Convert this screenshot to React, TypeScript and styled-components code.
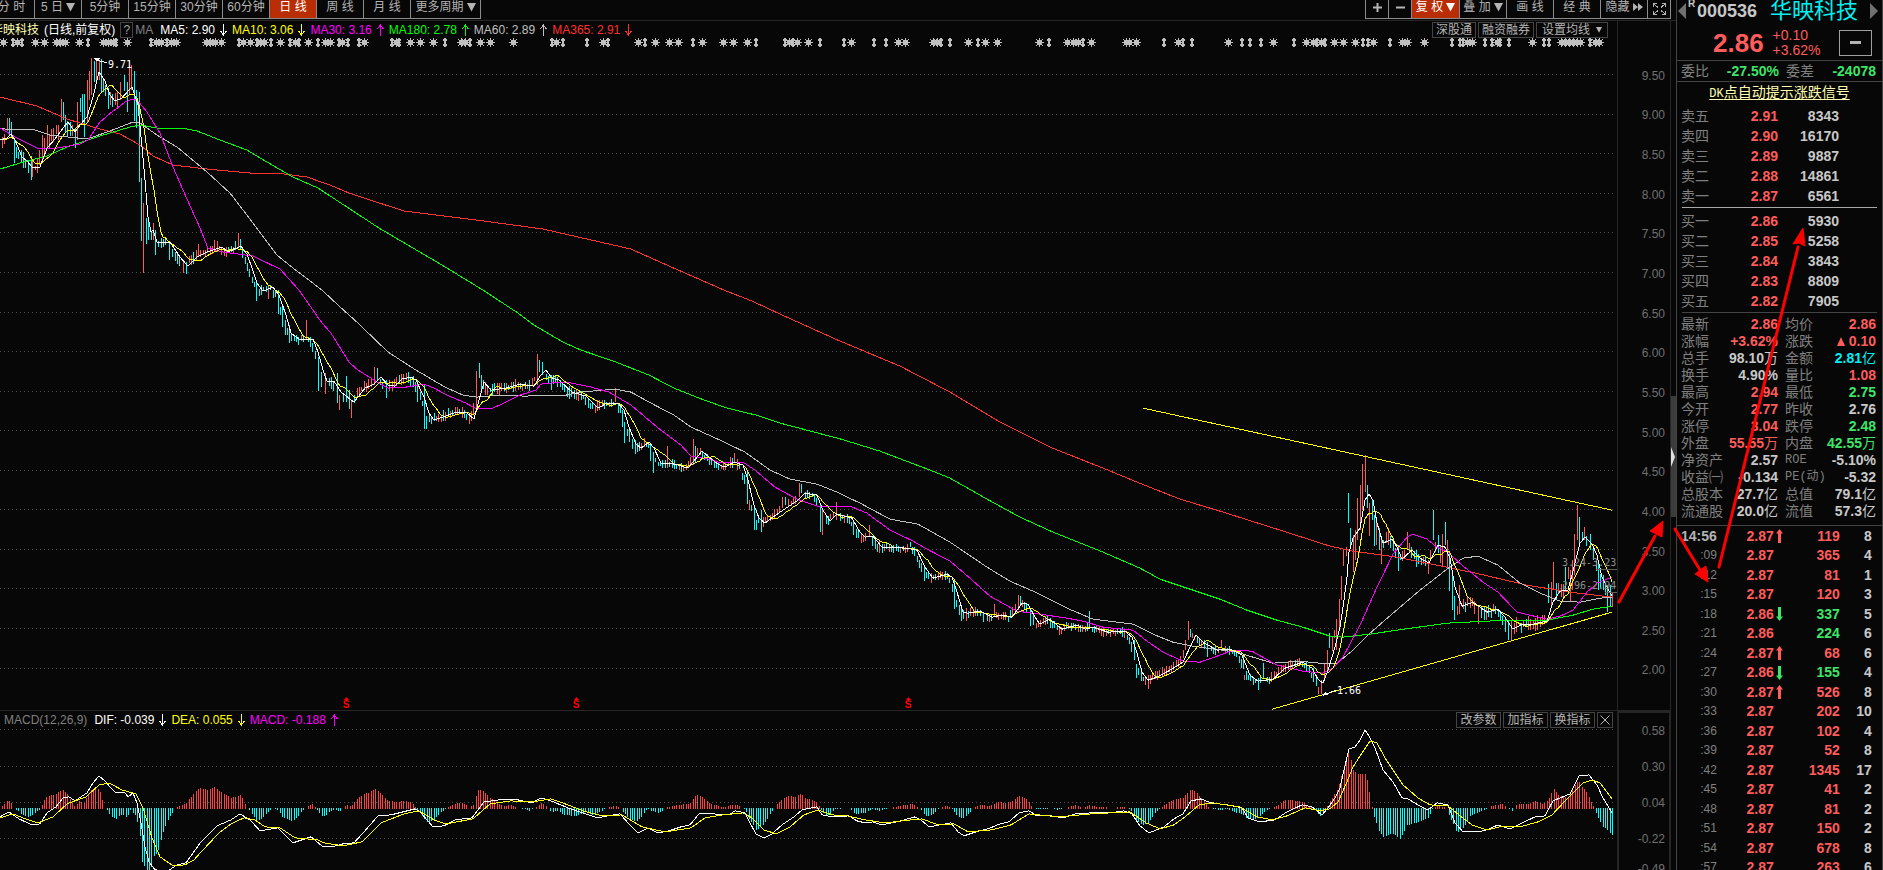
import React from "react";
import styled, { createGlobalStyle, css } from "styled-components";

const GlobalStyle = createGlobalStyle`
  * { box-sizing: border-box; }
  html, body { margin: 0; background: #070707; }
  body { overflow: hidden; }
  button { font-family: inherit; cursor: pointer; }
`;

const color = {
  bg: "#070707",
  line: "#262626",
  edge: "#444444",
  label: "#808080",
  text: "#c8c8c8",
  red: "#ff5c5c",
  green: "#3ce66a",
  cyan: "#00f0f0",
  yellow: "#ffff00",
  magenta: "#ff00ff",
  lime: "#00ff00",
  white: "#ffffff",
  silver: "#c0c0c0",
  trend: "#ff3030",
};

/* ---------- layout ---------- */

const Screen = styled.div`
  position: relative;
  display: flex;
  height: 100vh;
  overflow: hidden;
  background: ${color.bg};
  color: ${color.text};
  font-family: "Liberation Sans", "Noto Sans CJK SC", sans-serif;
  font-size: 12px;
  line-height: 16px;
`;

const Main = styled.main`
  flex: 1;
  min-width: 0;
  display: flex;
  flex-direction: column;
`;

const Toolbar = styled.nav`
  display: flex;
  justify-content: space-between;
  height: 21px;
  flex: none;
  padding-right: 5px;
  border-bottom: 1px solid ${color.line};
`;

const Group = styled.div<{ $bleed?: boolean }>`
  display: flex;
  height: 19px;
  margin-left: ${(p) => (p.$bleed ? "-12px" : "0")};
`;

const ToolButton = styled.button<{ $w: number; $on?: boolean; $mark?: boolean }>`
  display: flex;
  align-items: flex-start;
  justify-content: center;
  gap: 3px;
  width: ${(p) => p.$w}px;
  padding: 0;
  border: solid #8c8c8c;
  border-width: 0 1px 1px 0;
  background: ${(p) => (p.$on ? "#b92d05" : color.bg)};
  color: ${(p) => (p.$on ? "#ffffff" : "#b4b4b4")};
  font-size: 12px;
  line-height: 15px;
  white-space: pre;
  &:first-child { border-left-width: 1px; }
  svg { margin-top: 3px; }
`;

const Panes = styled.div`
  flex: 1;
  min-height: 0;
  display: flex;
`;

const PaneColumn = styled.div`
  flex: 1;
  min-width: 0;
  display: flex;
  flex-direction: column;
`;

const Pane = styled.section<{ $share: number; $last?: boolean }>`
  flex: ${(p) => p.$share} 1 0;
  min-height: 0;
  display: flex;
  border-bottom: ${(p) => (p.$last ? "0" : `1px solid ${color.line}`)};
`;

const Plot = styled.div`
  flex: 1;
  min-width: 0;
  display: flex;
  flex-direction: column;
`;

const PlotHead = styled.div`
  display: flex;
  justify-content: space-between;
  align-items: center;
  height: 17px;
  flex: none;
  white-space: nowrap;
`;

const Legend = styled.div<{ $start: number }>`
  display: flex;
  align-items: center;
  gap: 5px;
  margin-left: ${(p) => p.$start}px;
`;

const LegendTitle = styled.span`
  display: flex;
  align-items: center;
  gap: 2px;
  padding-right: 2px;
  color: ${color.label};
`;

const LegendItem = styled.span<{ $c: string }>`
  display: flex;
  align-items: center;
  gap: 5px;
  color: ${(p) => p.$c};
`;

const Symbol = styled.span`
  color: #ffffb4;
`;

const Period = styled.span`
  color: ${color.white};
`;

const HelpButton = styled.button`
  width: 13px;
  height: 16px;
  padding: 0;
  border: 1px solid ${color.edge};
  background: none;
  color: #a0a0a0;
  font-size: 12px;
  line-height: 14px;
`;

const HeadButtons = styled.div<{ $end: number }>`
  display: flex;
  gap: 2px;
  margin-right: ${(p) => p.$end}px;
`;

const HeadButton = styled.button<{ $w: number }>`
  display: flex;
  align-items: center;
  justify-content: center;
  gap: 6px;
  width: ${(p) => p.$w}px;
  height: 16px;
  padding: 0;
  border: 1px solid ${color.edge};
  background: none;
  color: #b4b4b4;
  font-size: 12px;
  line-height: 14px;
`;

const MarkRow = styled.svg`
  display: block;
  width: 100%;
  height: 10px;
  flex: none;
`;

const Canvas = styled.div`
  position: relative;
  flex: 1;
  min-height: 0;
  > svg { display: block; width: 100%; height: 100%; overflow: hidden; }
`;

const Note = styled.span<{ $x: number; $y: number; $dim?: boolean }>`
  position: absolute;
  left: ${(p) => (p.$x / 1617) * 100}%;
  top: ${(p) => (p.$y / 662) * 100}%;
  color: ${(p) => (p.$dim ? "#8c8c8c" : color.white)};
  font-family: "DejaVu Sans Mono", monospace;
  font-size: 10px;
  line-height: 12px;
  white-space: nowrap;
`;

const Dividend = styled.span<{ $x: number }>`
  position: absolute;
  left: ${(p) => (p.$x / 1617) * 100}%;
  bottom: 0;
  display: flex;
  flex-direction: column;
  align-items: center;
  width: 8px;
  color: #ff0000;
  font-size: 10px;
  font-weight: bold;
  line-height: 10px;
`;

const Axis = styled.div<{ $boxed?: boolean }>`
  width: 54px;
  flex: none;
  display: flex;
  flex-direction: column;
  overflow: hidden;
  border: solid ${color.line};
  border-width: ${(p) => (p.$boxed ? "2px 2px 0 2px" : "0 1px 0 1px")};
  padding: ${(p) => (p.$boxed ? "0 4px 0 0" : "35px 5px 20px 0")};
  color: #707070;
`;

const AxisLabel = styled.span<{ $h?: number }>`
  flex: ${(p) => (p.$h ? `0 0 ${p.$h}px` : "1")};
  display: flex;
  align-items: center;
  justify-content: flex-end;
`;

const Splitter = styled.div`
  width: 5px;
  flex: none;
  display: flex;
  flex-direction: column;
`;

const SplitterGap = styled.div<{ $grow: number }>`
  flex: ${(p) => p.$grow};
`;

const SplitterThumb = styled.button`
  display: flex;
  align-items: center;
  width: 5px;
  height: 121px;
  padding: 0;
  border: 0;
  background: #3c3c3c;
`;

/* ---------- quote panel ---------- */

const Side = styled.aside`
  width: 207px;
  flex: none;
  border-left: 1px solid ${color.edge};
  border-right: 1px solid ${color.edge};
  font-size: 14px;
`;

const Name = styled.header`
  display: flex;
  align-items: center;
  justify-content: space-between;
  height: 21px;
  padding: 0 4px 0 1px;
`;

const Code = styled.span`
  position: relative;
  margin-left: 11px;
  color: ${color.text};
  font-size: 18px;
  font-weight: bold;
  line-height: 20px;
`;

const Badge = styled.sup`
  position: absolute;
  left: -9px;
  top: -5px;
  font-size: 10px;
  line-height: 16px;
`;

const Company = styled.h1`
  margin: 0 12px 0 auto;
  color: ${color.cyan};
  font-size: 22px;
  font-weight: normal;
  line-height: 20px;
`;

const Arrow = styled.button`
  display: flex;
  padding: 0;
  border: 0;
  background: none;
`;

const PriceRow = styled.div`
  display: flex;
  align-items: center;
  height: 40px;
  padding: 4px 10px 0 36px;
  border-bottom: 1px solid ${color.edge};
  color: ${color.red};
  font-weight: bold;
`;

const LastPrice = styled.span`
  font-size: 26px;
  line-height: 30px;
`;

const Change = styled.span`
  display: flex;
  flex-direction: column;
  margin-left: 9px;
  font-size: 14px;
  font-weight: normal;
  line-height: 15px;
`;

const MinusButton = styled.button`
  display: flex;
  align-items: center;
  justify-content: center;
  width: 33px;
  height: 26px;
  margin-left: auto;
  padding: 0;
  border: 1px solid #a0a0a0;
  background: none;
`;

const Ratio = styled.div`
  display: grid;
  grid-template-columns: 28px 70px 7px 28px 1fr;
  align-items: center;
  height: 21px;
  padding: 0 6px 0 4px;
  border-bottom: 1px solid ${color.edge};
`;

const Muted = styled.span`
  color: ${color.label};
`;

const Figure = styled.span<{ $c: string }>`
  color: ${(p) => p.$c};
  font-weight: bold;
  text-align: right;
`;

const Signal = styled.a`
  display: block;
  height: 24px;
  color: #ffffb4;
  line-height: 20px;
  text-align: center;
  text-underline-offset: 2px;
`;

const SignalCode = styled.span`
  font-family: "Liberation Mono", monospace;
  font-size: 12px;
`;

const cell = css`
  padding: 0;
  white-space: nowrap;
`;

const Table = styled.table<{ $row: number; $stagger?: boolean }>`
  border-collapse: collapse;
  table-layout: fixed;
  margin-left: 4px;
  line-height: 17px;
  th, td { ${cell} height: ${(p) => p.$row}px; }
  ${(p) =>
    p.$stagger &&
    css`
      tr:nth-child(even) td { height: 19px; }
    `}
`;

const Label = styled.th<{ $latin?: boolean }>`
  color: ${color.label};
  font-weight: normal;
  text-align: left;
  ${(p) =>
    p.$latin &&
    css`
      font-family: "Liberation Mono", "Noto Sans CJK SC", monospace;
      font-size: 12px;
    `}
`;

const Num = styled.td<{ $c: string }>`
  color: ${(p) => p.$c};
  font-weight: bold;
  text-align: right;
`;

const Unit = styled.span`
  font-weight: normal;
`;

const Time = styled.td<{ $full?: boolean }>`
  color: ${(p) => (p.$full ? "#b4b4b4" : color.label)};
  font-size: ${(p) => (p.$full ? 14 : 12)}px;
  font-weight: ${(p) => (p.$full ? "bold" : "normal")};
  text-align: right;
`;

const Dir = styled.td`
  text-align: center;
  svg { display: block; margin: 0 auto; }
`;

const Rule = styled.hr<{ $kind: "light" | "dim" | "full" }>`
  height: 1px;
  border: 0;
  background: ${(p) => (p.$kind === "light" ? "#a8a8a8" : color.edge)};
  margin: ${(p) =>
    p.$kind === "light" ? "1px 5px 3px" : p.$kind === "dim" ? "1px 5px 3px" : "5px 0 0"};
`;

const Pointers = styled.svg`
  position: absolute;
  right: 0;
  top: 0;
  pointer-events: none;
`;

/* ---------- chart data ---------- */

type Pt = [number, number];

const parse = (s: string): Pt[] =>
  s.trim().split(/\s+/).map((p) => p.split(",").map(Number) as Pt);

const at = (pts: Pt[], x: number) => {
  if (x <= pts[0][0]) return pts[0][1];
  for (let i = 1; i < pts.length; i++) {
    if (x <= pts[i][0]) {
      const [x0, y0] = pts[i - 1];
      const [x1, y1] = pts[i];
      return y0 + ((y1 - y0) * (x - x0)) / (x1 - x0 || 1);
    }
  }
  return pts[pts.length - 1][1];
};

const ma5 = parse(`0,140 7,138 11,134 15,140 22,157 27,161 33,168 40,167 47,148 55,139 63,128 68,122 75,132 80,125 87,117 93,97
99,72 105,81 110,95 115,101 122,98 128,91 132,87 138,105 142,147 145,180 148,217 151,232 153,230 157,242 165,243 170,242 180,257
188,266 197,257 207,252 222,247 228,252 241,246 247,254 252,268 257,283 263,291 273,287 279,295 286,315 291,333 299,339 313,339
318,352 324,373 327,381 334,381 341,392 354,402 365,388 374,384 381,377 388,385 395,386 402,379 411,377 416,380 424,397 429,413
434,420 443,417 456,412 466,412 474,419 479,400 484,382 491,390 506,388 520,384 534,386 540,376 546,370 552,378 559,380 572,392
586,396 598,408 607,403 618,403 624,410 629,427 636,444 641,448 649,442 654,448 661,463 675,464 688,468 693,462 702,451 709,457
718,464 725,467 734,462 743,465 748,480 754,505 759,518 765,523 773,517 783,510 798,500 805,493 817,495 823,510 830,521 837,514
852,518 860,532 865,537 873,536 882,547 907,548 917,550 925,567 933,578 947,574 952,577 957,592 963,612 968,613 980,611 992,617
1003,615 1012,617 1022,603 1028,604 1035,617 1040,624 1050,619 1062,629 1077,625 1085,629 1093,627 1108,632 1125,631 1132,637
1137,653 1142,672 1148,680 1157,677 1170,670 1183,662 1190,647 1196,635 1203,642 1217,650 1230,649 1242,655 1250,675 1258,681
1273,679 1285,668 1303,662 1312,668 1318,679 1323,683 1328,670 1335,647 1340,627 1344,600 1347,577 1349,552 1353,538 1360,528
1365,500 1369,494 1373,500 1377,523 1383,543 1392,539 1397,547 1402,559 1412,550 1420,558 1429,563 1438,545 1445,547 1450,558
1455,587 1462,606 1473,602 1487,612 1498,609 1505,617 1513,629 1522,624 1533,624 1547,621 1553,602 1560,591 1568,590 1575,563
1580,543 1585,537 1592,544 1597,555 1602,577 1607,587 1612,596`);

const ma30 = parse(`0,128 17,138 37,148 57,148 80,144 88,140 100,122 113,111 125,102 133,99 138,101 147,112 160,133 173,167 183,190
200,228 208,248 223,252 253,256 280,269 299,290 322,323 331,333 349,362 358,370 374,380 388,388 406,387 424,384 434,388 449,396
466,403 475,408 493,408 506,402 520,395 536,390 541,384 559,382 572,383 591,387 609,392 631,405 657,427 681,445 691,456 709,459
718,462 743,462 755,470 775,487 797,499 817,506 850,506 867,513 890,530 913,541 927,549 950,561 970,578 990,596 1017,611 1040,614
1067,618 1083,621 1103,627 1133,630 1147,641 1163,652 1183,661 1200,662 1217,656 1233,650 1252,651 1277,665 1303,671 1323,673
1333,668 1343,657 1360,625 1377,587 1393,554 1407,537 1413,534 1427,539 1437,547 1448,552 1462,565 1483,582 1498,592 1517,612
1547,619 1560,616 1573,610 1587,592 1597,583 1612,577`);

const ma60 = parse(`0,128 10,130 32,129 50,135 87,139 110,131 133,122 140,123 157,135 177,147 207,172 230,193 253,223 277,255
293,268 322,290 338,305 358,323 388,352 416,370 445,387 463,395 477,397 499,395 524,396 566,395 581,392 615,389 631,392 649,402
674,415 691,427 720,440 745,452 770,470 790,479 817,484 837,492 860,503 890,519 918,524 950,542 987,567 1010,581 1033,591
1067,608 1093,619 1133,624 1153,634 1173,642 1193,646 1237,652 1253,657 1273,663 1300,661 1320,663 1337,663 1353,650 1370,633
1393,613 1420,590 1447,569 1463,558 1478,556 1498,565 1520,583 1540,593 1560,601 1580,602 1600,598 1612,597`);

const ma180 = parse(`0,169 27,161 47,156 67,147 100,136 130,127 140,125 157,128 182,128 197,131 220,140 247,150 267,162 293,177
318,188 379,228 442,265 483,290 518,313 534,325 563,342 581,350 616,362 649,375 674,388 699,398 727,408 756,415 780,423 841,439
880,451 930,470 950,478 987,499 1020,517 1053,532 1103,552 1140,568 1160,579 1187,588 1220,599 1247,610 1277,620 1303,627
1330,636 1343,637 1370,634 1397,630 1447,623 1507,620 1547,620 1573,615 1593,609 1612,606`);

const ma365 = parse(`0,97 37,106 67,119 100,129 120,134 140,145 153,156 173,165 207,169 250,173 277,173 307,177 330,185 349,193
404,211 484,221 543,229 631,249 660,262 724,290 752,301 780,314 840,341 900,366 950,392 1000,422 1050,447 1108,470 1137,482
1180,499 1220,511 1277,529 1330,546 1353,551 1397,557 1437,565 1480,574 1527,585 1570,592 1612,597`);

/* session bars with a wide range: direction, x, high, low */
const wideBars = `u2,137,148 u7,118,131 d9,118,135 d11,122,138 d14,138,163 d31,156,180 u32,160,177 u42,135,160 u47,125,147 u61,99,122
d63,102,120 d75,128,148 u77,102,140 d80,98,112 d82,94,122 d84,94,137 u87,80,122 u89,71,100 u91,58,95 d94,61,82 u96,60,82 u99,60,80
d101,59,93 d103,80,92 d108,88,109 u110,92,105 u115,93,105 u117,92,109 u120,82,100 d124,75,91 d127,82,112 u129,60,95 u131,65,90
d134,71,121 d136,90,128 d139,92,182 d141,178,241 u143,203,273 d146,218,244 d148,221,240 u153,223,240 d155,230,255 d169,243,260
u183,262,273 d186,262,274 u198,244,257 u214,240,252 u238,233,247 d240,239,250 d256,283,301 u268,286,299 d278,290,314 d282,307,327
d285,320,335 d289,325,343 u306,320,340 d318,357,391 d321,372,387 u325,373,394 d337,373,403 u339,395,410 d346,376,402 d349,390,409
u351,400,418 u374,367,385 d377,368,380 d386,380,398 d417,380,402 d424,385,429 d426,416,429 u476,371,412 d479,363,378 d481,375,390
u537,354,385 d539,360,372 d542,362,375 d551,375,390 u615,388,402 d622,410,427 d624,422,443 d629,430,442 d635,440,454 d650,443,461
d653,452,473 u667,446,468 u693,439,465 d695,446,462 u734,453,462 d747,472,504 u749,500,510 d754,505,530 d756,520,530 d761,510,532
u782,497,508 d785,497,505 u799,483,497 d801,484,493 d820,505,532 u822,510,535 u836,502,520 d853,522,535 u869,525,537 u879,540,553
d910,542,547 d924,565,581 d954,580,609 d959,605,615 d961,605,621 u966,608,621 d983,612,622 u994,604,617 u1018,595,610
d1020,596,605 d1030,610,626 d1089,611,627 d1134,640,660 d1136,664,678 d1141,670,681 u1148,675,689 u1185,640,650 u1188,621,640
d1190,629,637 d1207,642,657 u1221,640,648 d1243,655,669 u1244,675,680 d1258,678,690 d1263,663,678 d1313,668,682 u1318,687,694
u1321,680,694 u1324,663,680 u1327,650,670 d1329,633,648 u1336,619,650 u1339,599,630 u1341,576,600 u1343,550,566 d1348,493,523
d1350,528,545 u1353,535,572 u1355,530,560 u1357,498,540 u1360,485,530 u1362,464,510 u1365,455,492 d1367,485,508 u1369,503,536
d1372,500,520 d1374,515,546 u1376,520,545 d1379,528,550 u1381,540,564 u1388,528,545 d1398,545,571 u1407,532,550 d1416,550,567
u1428,560,574 d1433,510,540 d1438,535,553 u1440,545,563 u1442,534,566 d1445,522,545 u1447,540,568 d1449,552,591 d1452,570,610
d1454,596,620 u1457,606,615 u1459,585,614 u1478,605,624 d1508,620,640 u1511,621,640 d1548,584,603 u1551,582,605 u1553,562,590
d1556,583,600 d1565,567,590 u1570,570,602 u1572,560,590 u1574,534,575 u1577,505,540 d1579,517,545 u1584,527,540 d1590,534,550
d1598,560,590 d1603,575,590 d1607,585,612 d1610,585,607 u1612,592,607`
  .trim()
  .split(/\s+/)
  .map((s) => {
    const [x, hi, lo] = s.slice(1).split(",").map(Number);
    return { up: s[0] === "u", x, hi, lo };
  });

const STEP = 7 / 3;
const slots = Array.from({ length: 691 }, (_, i) => Math.round(2 + i * STEP)).filter((x) => x <= 1612);

const noise = (n: number) => {
  const v = Math.sin(n * 12.9898) * 43758.5453;
  return v - Math.floor(v);
};

const candles = (() => {
  let up = "";
  let down = "";
  const add = (isUp: boolean, x: number, hi: number, lo: number) => {
    const d = `M${x + 0.5} ${Math.round(hi)}V${Math.round(lo)}`;
    if (isUp) up += d;
    else down += d;
  };
  wideBars.forEach((b) => add(b.up, b.x, b.hi, b.lo));
  slots.forEach((x, i) => {
    if (wideBars.some((b) => Math.abs(b.x - x) < 2)) return;
    const mid = at(ma5, x + 4);
    const slope = at(ma5, x + 8) - at(ma5, x - 2);
    const isUp = noise(i) * 10 - 5 > slope * 0.5;
    const room = x < 140 ? 9 : x < 600 ? 5 : x < 1330 ? 4 : 7;
    add(isUp, x, mid - 1 - noise(i + 900) * room, mid + 2 + noise(i + 1800) * room);
  });
  return { up, down };
})();

const dif = parse(`0,817 9,812 19,819 32,825 40,824 47,813 56,807 63,798 69,797 75,801 87,793 93,783 99,776 105,781 110,787 116,793
125,793 128,797 133,793 137,803 141,823 145,847 149,862 155,870 168,871 177,865 186,863 201,842 208,835 217,826 231,820 240,814
250,820 260,831 278,828 293,843 311,837 323,847 337,846 343,844 354,843 364,832 378,816 391,815 415,809 421,813 433,827 444,826
455,820 472,818 484,802 499,800 518,800 532,803 541,798 551,801 568,808 583,813 598,818 608,816 620,814 628,823 638,833 648,828
658,833 669,831 681,827 690,825 699,814 713,814 729,815 735,811 745,813 750,823 756,834 764,838 772,834 782,825 794,817 802,810
817,807 822,815 832,817 849,816 857,821 865,823 873,822 881,825 897,822 915,817 921,820 929,827 940,825 951,823 958,832 964,836
976,832 988,829 1000,824 1009,822 1019,813 1029,811 1037,816 1051,816 1063,818 1075,814 1091,813 1110,813 1124,811 1132,814
1140,826 1149,833 1164,827 1174,819 1183,814 1191,801 1201,799 1211,803 1227,805 1242,808 1248,818 1260,822 1275,820 1287,812
1302,805 1312,807 1322,815 1328,808 1335,798 1340,788 1344,770 1349,749 1355,747 1360,740 1365,730 1369,736 1375,748 1383,770
1393,782 1402,798 1408,799 1418,805 1428,810 1437,803 1448,805 1455,823 1463,832 1478,832 1487,830 1498,825 1510,829 1520,824
1535,817 1545,816 1553,801 1570,794 1579,776 1589,775 1597,785 1603,798 1612,813`);

const dea = parse(`0,818 13,814 23,818 38,823 53,817 67,804 86,797 99,785 109,783 122,790 136,794 143,808 152,838 160,857 173,866
185,865 194,860 204,849 219,833 231,824 244,818 255,820 265,827 280,828 295,838 318,840 324,843 343,846 362,842 381,823 404,814
419,811 434,820 446,824 473,819 490,804 511,801 532,802 551,799 568,805 583,811 602,816 622,815 642,827 665,832 691,828 705,818
723,815 743,813 752,818 764,830 776,834 790,827 804,815 818,810 832,815 847,816 865,820 885,823 911,820 922,819 938,825 954,824
968,832 992,830 1011,825 1029,814 1059,817 1091,814 1130,812 1146,823 1160,829 1174,825 1185,817 1199,805 1213,803 1240,807
1257,817 1272,820 1287,816 1305,808 1320,811 1330,809 1338,802 1347,782 1353,767 1362,753 1370,741 1377,743 1385,758 1393,770
1403,785 1418,798 1430,805 1448,806 1460,816 1472,825 1487,830 1500,827 1520,827 1538,822 1552,815 1568,798 1583,783 1592,780
1600,783 1612,799`);

const hist = parse(`0,0 3,3 8,8 12,4 14,0 16,-2 23,-7 29,-9 36,-4 41,0 43,6 47,12 55,13 62,19 67,14 72,5 75,0 79,7 84,5 88,14 92,19
99,19 101,12 104,1 107,-2 110,-8 116,-11 122,-6 127,-10 130,-2 135,-7 137,-14 140,-28 141,-52 145,-60 148,-63 152,-58 154,-48
157,-45 161,-32 164,-20 168,-12 173,-3 176,1 183,3 187,6 194,15 199,20 208,18 214,21 221,16 231,10 240,13 244,6 247,0 251,-4
256,-13 261,-11 267,-5 273,0 278,-2 282,-9 292,-14 298,-8 303,-2 307,1 312,4 316,0 319,-5 323,-9 328,-5 335,-1 339,-4 343,0
346,3 351,2 357,9 363,14 370,16 376,19 381,14 387,8 394,6 406,7 412,5 416,-1 421,-6 426,-14 433,-13 438,-7 445,-1 450,2 457,5
463,5 469,0 473,3 478,18 483,17 488,12 497,5 503,2 510,3 518,0 524,-1 529,-3 537,1 541,5 547,1 551,-4 558,-3 564,-7 577,-8
585,-4 593,-7 600,-4 606,0 615,2 620,0 628,-10 636,-14 642,-8 647,-1 652,-3 658,-5 663,-2 667,1 677,3 687,4 691,5 694,11 698,13
703,10 709,5 715,3 719,1 725,1 731,3 737,3 741,0 745,-2 749,-11 752,-16 756,-22 762,-18 767,-11 773,-1 777,4 783,10 789,12
794,11 801,14 806,9 812,8 817,6 820,0 824,-7 830,-7 835,-1 849,0 853,-5 857,-6 865,-5 873,-1 880,-3 884,-1 889,0 899,2 907,3
912,4 917,1 921,-2 926,-8 932,-7 938,-1 945,2 951,1 956,-7 962,-11 968,-6 973,0 978,3 990,2 998,6 1005,5 1011,6 1019,12 1027,9
1031,2 1034,-1 1045,-1 1051,0 1057,-2 1065,0 1075,3 1081,0 1090,3 1096,1 1102,1 1110,0 1124,1 1130,-1 1136,-12 1142,-17
1148,-15 1154,-6 1160,0 1166,4 1175,9 1183,10 1189,18 1195,17 1199,12 1204,7 1209,0 1219,-2 1227,-1 1233,-4 1242,-6 1247,-11
1253,-12 1258,-10 1265,-3 1272,0 1277,2 1285,8 1300,7 1308,2 1313,0 1320,-8 1324,-3 1327,2 1333,12 1338,20 1343,40 1348,55
1352,45 1353,38 1357,34 1366,34 1368,22 1370,10 1372,1 1374,-9 1378,-22 1383,-29 1392,-25 1400,-31 1407,-17 1420,-14 1428,-10
1433,1 1440,2 1447,0 1450,-10 1457,-25 1463,-20 1470,-8 1478,-5 1487,0 1495,3 1502,4 1507,0 1512,-3 1517,4 1527,4 1535,7
1543,4 1548,8 1553,20 1558,13 1568,10 1573,20 1578,27 1583,20 1588,13 1592,4 1594,0 1597,-8 1602,-18 1607,-22 1612,-27`);

const bars = slots.reduce(
  (acc, x) => {
    const h = Math.round(at(hist, x));
    if (h > 0) acc.up += `M${x + 0.5} 809V${808 - h}`;
    if (h < 0) acc.down += `M${x + 0.5} 808V${808 - h}`;
    return acc;
  },
  { up: "", down: "" }
);

/* event markers: plain number = star, trailing i = narrow marker */
const events = `3 13i 17 22i 35 44 56 60 65 79 88i 103 108 113 116i 127 151i 156 161 167i 171 176 206 210 215 221 239i 243 250 257i
260 264 271i 280 290i 295 299i 308 318i 325 330 339i 342 348i 359i 364 392i 396 399i 410 420 433 445i 461 465 470i 480 490 513 552i
556 563i 587i 603 608i 638 645i 655 669 678 693i 702 723 733 747 756i 785i 789 793i 797 808 820i 844i 851 874i 886i 898 905 933 937
941i 950i 968 978i 985 997 1039 1049i 1067 1073 1078 1083i 1091 1126 1129 1136 1164i 1178 1183i 1192i 1228 1242i 1250i 1261i 1273
1294i 1306 1313 1317i 1321 1325i 1334 1343 1355 1363i 1368i 1373 1390i 1402 1407 1424 1452i 1460i 1463i 1467 1472 1485i 1492i 1497
1500i 1509i 1532 1544i 1549i 1561 1565 1569 1573 1577 1580 1590i 1595 1599`.split(/\s+/);

const eventPath = events
  .map((e) => {
    const x = parseInt(e, 10);
    return e.endsWith("i")
      ? `M${x - 1} 38h2v1h1v2h-1v3h1v2h-1v1h-2v-1h-1v-2h1v-3h-1v-2h1z`
      : `M${x} 38h1v9h-1zM${x - 4} 42h9v1h-9zM${x - 2} 40h5v5h-5zM${x - 3} 39h1v1h-1zM${x + 3} 39h1v1h-1zM${x - 3} 45h1v1h-1zM${x + 3} 45h1v1h-1z`;
  })
  .join("");

/* ---------- small drawings ---------- */

const Caret = ({ w = 9, c = "currentColor" }: { w?: number; c?: string }) => (
  <svg width={w} height={w} viewBox="0 0 9 9" aria-hidden>
    <path d="M0 0h9L4.5 8.5z" fill={c} />
  </svg>
);

const Trend = ({ up }: { up?: boolean }) => (
  <svg width="7" height="12" viewBox="0 0 7 12" aria-hidden fill="none" stroke="currentColor" shapeRendering="crispEdges">
    <path d={up ? "M3.5 12V0M0.5 5L3.5 1L6.5 5" : "M3.5 0V12M0.5 7L3.5 11L6.5 7"} />
  </svg>
);

const TickArrow = ({ up }: { up: boolean }) => (
  <svg width="7" height="14" viewBox="0 0 7 14" aria-hidden>
    <path
      d={up ? "M3.5 0L7 4.5H5V14H2V4.5H0z" : "M3.5 14L7 9.5H5V0H2V9.5H0z"}
      fill={up ? color.red : color.green}
    />
  </svg>
);

const Series = ({ pts, c }: { pts: Pt[]; c: string }) => (
  <polyline points={pts.map((p) => p.join(",")).join(" ")} fill="none" stroke={c} vectorEffect="non-scaling-stroke" />
);

const GridLines = ({ ys }: { ys: number[] }) => (
  <path
    d={ys.map((y) => `M0 ${y + 0.5}H1614`).join("")}
    stroke="#505050"
    strokeDasharray="1 3"
    vectorEffect="non-scaling-stroke"
  />
);

/* ---------- content ---------- */

const periods = ["分 时", "5 日", "5分钟", "15分钟", "30分钟", "60分钟", "日 线", "周 线", "月 线", "更多周期"];

const legend = [
  ["MA5: 2.90", color.white, false],
  ["MA10: 3.06", color.yellow, false],
  ["MA30: 3.16", color.magenta, true],
  ["MA180: 2.78", color.lime, true],
  ["MA60: 2.89", color.silver, true],
  ["MA365: 2.91", color.trend, false],
] as const;

const macdLegend = [
  ["DIF: -0.039", color.white, false],
  ["DEA: 0.055", color.yellow, false],
  ["MACD: -0.188", color.magenta, true],
] as const;

const priceTicks = Array.from({ length: 16 }, (_, i) => (9.5 - i * 0.5).toFixed(2));
const priceGrid = [74, 114, 153, 193, 232, 272, 312, 351, 391, 430, 470, 509, 549, 588, 628, 668];
const macdTicks = ["0.58", "0.30", "0.04", "-0.22", "-0.49"];
const macdGrid = [729, 766, 802, 838];

const asks = [
  ["卖五", "2.91", "8343"],
  ["卖四", "2.90", "16170"],
  ["卖三", "2.89", "9887"],
  ["卖二", "2.88", "14861"],
  ["卖一", "2.87", "6561"],
];
const bids = [
  ["买一", "2.86", "5930"],
  ["买二", "2.85", "5258"],
  ["买三", "2.84", "3843"],
  ["买四", "2.83", "8809"],
  ["买五", "2.82", "7905"],
];

const { red, green, text, cyan } = color;
const stats: [string, string, string, string, string, string][] = [
  ["最新", "2.86", red, "均价", "2.86", red],
  ["涨幅", "+3.62%", red, "涨跌", "▲0.10", red],
  ["总手", "98.10万", text, "金额", "2.81亿", cyan],
  ["换手", "4.90%", text, "量比", "1.08", red],
  ["最高", "2.94", red, "最低", "2.75", green],
  ["今开", "2.77", red, "昨收", "2.76", text],
  ["涨停", "3.04", red, "跌停", "2.48", green],
  ["外盘", "55.55万", red, "内盘", "42.55万", green],
  ["净资产", "2.57", text, "ROE", "-5.10%", text],
  ["收益㈠", "-0.134", text, "PE(动)", "-5.32", text],
  ["总股本", "27.7亿", text, "总值", "79.1亿", text],
  ["流通股", "20.0亿", text, "流值", "57.3亿", text],
];

const ticks: [string, string, "" | "u" | "d", string, string, string][] = [
  ["14:56", "2.87", "u", "119", red, "8"],
  [":09", "2.87", "", "365", red, "4"],
  [":12", "2.87", "", "81", red, "1"],
  [":15", "2.87", "", "120", red, "3"],
  [":18", "2.86", "d", "337", green, "5"],
  [":21", "2.86", "", "224", green, "6"],
  [":24", "2.87", "u", "68", red, "6"],
  [":27", "2.86", "d", "155", green, "4"],
  [":30", "2.87", "u", "526", red, "8"],
  [":33", "2.87", "", "202", red, "10"],
  [":36", "2.87", "", "102", red, "4"],
  [":39", "2.87", "", "52", red, "8"],
  [":42", "2.87", "", "1345", red, "17"],
  [":45", "2.87", "", "41", red, "2"],
  [":48", "2.87", "", "81", red, "2"],
  [":51", "2.87", "", "150", red, "2"],
  [":54", "2.87", "", "678", red, "8"],
  [":57", "2.87", "", "263", red, "6"],
];

const Value = ({ v }: { v: string }) => {
  const unit = /[万亿]$/.test(v) ? v.slice(-1) : "";
  const rise = v.startsWith("▲");
  const body = v.slice(rise ? 1 : 0, unit ? -1 : undefined);
  return (
    <>
      {rise && (
        <svg width="12" height="9" viewBox="0 0 12 9" aria-hidden>
          <path d="M4 0L8 9H0z" fill={color.red} />
        </svg>
      )}
      {body}
      {unit && <Unit>{unit}</Unit>}
    </>
  );
};

const Book = ({ rows }: { rows: string[][] }) => (
  <Table $row={20}>
    <colgroup>
      <col width="40" />
      <col width="57" />
      <col width="61" />
    </colgroup>
    <tbody>
      {rows.map(([name, price, volume]) => (
        <tr key={name}>
          <Label scope="row">{name}</Label>
          <Num $c={color.red}>{price}</Num>
          <Num $c={color.text}>{volume}</Num>
        </tr>
      ))}
    </tbody>
  </Table>
);

export default function App() {
  return (
    <Screen>
      <GlobalStyle />
      <Main>
        <Toolbar>
          <Group $bleed>
            {periods.map((p, i) => (
              <ToolButton key={p} $w={i === 9 ? 70 : 47} $on={i === 6}>
                {p}
                {(i === 1 || i === 9) && <Caret />}
              </ToolButton>
            ))}
          </Group>
          <Group>
            <ToolButton $w={24} aria-label="放大">
              <svg width="9" height="9" viewBox="0 0 9 9" stroke="currentColor" strokeWidth="2"><path d="M4.5 0v9M0 4.5h9" /></svg>
            </ToolButton>
            <ToolButton $w={23} aria-label="缩小">
              <svg width="9" height="9" viewBox="0 0 9 9" stroke="currentColor" strokeWidth="2"><path d="M0 4.5h9" /></svg>
            </ToolButton>
            <ToolButton $w={48} $on>复 权<Caret /></ToolButton>
            <ToolButton $w={47}>叠 加<Caret /></ToolButton>
            <ToolButton $w={47}>画 线</ToolButton>
            <ToolButton $w={47}>经 典</ToolButton>
            <ToolButton $w={47}>
              隐藏
              <svg width="10" height="8" viewBox="0 0 10 8" fill="currentColor"><path d="M0 0l5 4-5 4zM5 0l5 4-5 4z" /></svg>
            </ToolButton>
            <ToolButton $w={23} aria-label="全屏">
              <svg width="13" height="12" viewBox="0 0 13 12" fill="none" stroke="currentColor" shapeRendering="crispEdges">
                <path d="M0.5 4V0.5H4M9 0.5h3.5V4M12.5 8v3.5H9M4 11.5H0.5V8M1 1l4 3.5M12 1L8 4.5M1 11l4-3.5M12 11L8 7.5" />
              </svg>
            </ToolButton>
          </Group>
        </Toolbar>
        <Panes>
          <PaneColumn>
            <Pane $share={690}>
              <Plot>
                <PlotHead>
                  <Legend $start={-9}>
                    <Symbol>华映科技</Symbol>
                    <Period>(日线,前复权)</Period>
                    <LegendTitle>
                      <HelpButton aria-label="说明">?</HelpButton>
                      MA
                    </LegendTitle>
                    {legend.map(([label, c, up]) => (
                      <LegendItem key={label} $c={c}>{label}<Trend up={up} /></LegendItem>
                    ))}
                  </Legend>
                  <HeadButtons $end={9}>
                    <HeadButton $w={44}>深股通</HeadButton>
                    <HeadButton $w={56}>融资融券</HeadButton>
                    <HeadButton $w={72}>设置均线<Caret w={6} /></HeadButton>
                  </HeadButtons>
                </PlotHead>
                <MarkRow viewBox="0 38 1617 10" preserveAspectRatio="none" shapeRendering="crispEdges">
                  <path d={eventPath} fill={color.silver} />
                </MarkRow>
                <Canvas>
                  <svg viewBox="0 48 1617 662" preserveAspectRatio="none" shapeRendering="crispEdges">
                    <GridLines ys={priceGrid} />
                    <path d={candles.up} stroke="#ff5a5a" vectorEffect="non-scaling-stroke" />
                    <path d={candles.down} stroke="#00ffff" vectorEffect="non-scaling-stroke" />
                    <Series pts={ma365} c={color.trend} />
                    <Series pts={ma180} c={color.lime} />
                    <Series pts={ma60} c={color.silver} />
                    <Series pts={ma30} c={color.magenta} />
                    <Series pts={slots.map((x) => [x, Math.round((at(ma5, x) + at(ma5, x - 12)) / 2)] as Pt)} c={color.yellow} />
                    <Series pts={ma5} c={color.white} />
                    <Series pts={[[1143, 408], [1612, 510]]} c={color.yellow} />
                    <Series pts={[[1272, 709], [1612, 612]]} c={color.yellow} />
                    <Series pts={[[97, 60], [107, 63]]} c={color.white} />
                    <path d="M93 58h7l-3 4zM1322 696l3-4 4 2z" fill={color.white} />
                    <Series pts={[[1323, 695], [1336, 690]]} c={color.white} />
                    <path d="M1596 569.5h21M1605 592.5h12" stroke="#606060" />
                  </svg>
                  <Note $x={108} $y={11}>9.71</Note>
                  <Note $x={1337} $y={637}>1.66</Note>
                  <Note $x={1562} $y={509} $dim>3.24-3.23</Note>
                  <Note $x={1562} $y={532} $dim>2.96-2.94</Note>
                  {[342, 572, 904].map((x) => (
                    <Dividend key={x} $x={x}>
                      <svg width="5" height="3" viewBox="0 0 5 3"><path d="M0 3L2.5 0L5 3z" fill="#ff0000" /></svg>
                      S
                    </Dividend>
                  ))}
                </Canvas>
              </Plot>
              <Axis>
                {priceTicks.map((t) => <AxisLabel key={t}>{t}</AxisLabel>)}
              </Axis>
            </Pane>
            <Pane $share={159} $last>
              <Plot>
                <PlotHead>
                  <Legend $start={4}>
                    <LegendTitle>MACD(12,26,9)</LegendTitle>
                    {macdLegend.map(([label, c, up]) => (
                      <LegendItem key={label} $c={c}>{label}<Trend up={up} /></LegendItem>
                    ))}
                  </Legend>
                  <HeadButtons $end={4}>
                    <HeadButton $w={45}>改参数</HeadButton>
                    <HeadButton $w={45}>加指标</HeadButton>
                    <HeadButton $w={45}>换指标</HeadButton>
                    <HeadButton $w={16} aria-label="关闭">
                      <svg width="10" height="10" viewBox="0 0 10 10" stroke="currentColor"><path d="M0.5 0.5l9 9M9.5 0.5l-9 9" /></svg>
                    </HeadButton>
                  </HeadButtons>
                </PlotHead>
                <Canvas>
                  <svg viewBox="0 728 1617 142" preserveAspectRatio="none" shapeRendering="crispEdges">
                    <GridLines ys={macdGrid} />
                    <path d={bars.up} stroke="#ff4040" vectorEffect="non-scaling-stroke" />
                    <path d={bars.down} stroke="#00ffff" vectorEffect="non-scaling-stroke" />
                    <Series pts={dif} c={color.white} />
                    <Series pts={dea} c={color.yellow} />
                  </svg>
                </Canvas>
              </Plot>
              <Axis $boxed>
                {macdTicks.map((t, i) => <AxisLabel key={t} $h={i === 4 ? 24 : 36}>{t}</AxisLabel>)}
              </Axis>
            </Pane>
          </PaneColumn>
          <Splitter>
            <SplitterGap $grow={375} />
            <SplitterThumb aria-label="收起侧栏">
              <svg width="4" height="20" viewBox="0 0 4 20"><path d="M0 0L4 10L0 20z" fill="#e0e0e0" /></svg>
            </SplitterThumb>
            <SplitterGap $grow={353} />
          </Splitter>
        </Panes>
      </Main>

      <Side>
        <Name>
          <Arrow aria-label="上一只"><svg width="8" height="16" viewBox="0 0 8 16"><path d="M8 0v16L0 8z" fill="#707070" /></svg></Arrow>
          <Code><Badge>R</Badge>000536</Code>
          <Company>华映科技</Company>
          <Arrow aria-label="下一只"><svg width="8" height="16" viewBox="0 0 8 16"><path d="M0 0v16l8-8z" fill="#707070" /></svg></Arrow>
        </Name>
        <PriceRow>
          <LastPrice>2.86</LastPrice>
          <Change><span>+0.10</span><span>+3.62%</span></Change>
          <MinusButton aria-label="移出自选"><svg width="11" height="3" viewBox="0 0 11 3"><path d="M0 0h11v3H0z" fill="#b4b4b4" /></svg></MinusButton>
        </PriceRow>
        <Ratio>
          <Muted>委比</Muted>
          <Figure $c={color.green}>-27.50%</Figure>
          <span />
          <Muted>委差</Muted>
          <Figure $c={color.green}>-24078</Figure>
        </Ratio>
        <Signal href="#signal"><SignalCode>DK</SignalCode>点自动提示涨跌信号</Signal>
        <Book rows={asks} />
        <Rule $kind="light" />
        <Book rows={bids} />
        <Rule $kind="dim" />
        <Table $row={17}>
          <colgroup>
            <col width="42" />
            <col width="55" />
            <col width="7" />
            <col width="42" />
            <col width="48" />
          </colgroup>
          <tbody>
            {stats.map(([a, av, ac, b, bv, bc]) => (
              <tr key={a}>
                <Label scope="row">{a}</Label>
                <Num $c={ac}><Value v={av} /></Num>
                <td />
                <Label scope="row" $latin={/^[A-Z]/.test(b)}>{b}</Label>
                <Num $c={bc}><Value v={bv} /></Num>
              </tr>
            ))}
          </tbody>
        </Table>
        <Rule $kind="full" />
        <Table $row={20} $stagger>
          <colgroup>
            <col width="35" />
            <col width="57" />
            <col width="11" />
            <col width="55" />
            <col width="32" />
          </colgroup>
          <tbody>
            {ticks.map(([time, price, dir, volume, c, count]) => (
              <tr key={time}>
                <Time $full={time.length > 3}>{time}</Time>
                <Num $c={color.red}>{price}</Num>
                <Dir>{dir && <TickArrow up={dir === "u"} />}</Dir>
                <Num $c={c}>{volume}</Num>
                <Num $c={color.text}>{count}</Num>
              </tr>
            ))}
          </tbody>
        </Table>
      </Side>

      <Pointers width="283" height="620" viewBox="1600 0 283 620" fill="#ff0000" stroke="#ff0000">
        <path d="M1619 602L1655 536M1675 529L1700 570M1719 567L1798 247" strokeWidth="3" strokeLinecap="round" />
        <path d="M1663 521L1662 537L1656 534L1650 531zM1708 582L1695 574L1700 570L1706 566zM1803 228L1793 244L1799 243L1805 246z" />
      </Pointers>
    </Screen>
  );
}
